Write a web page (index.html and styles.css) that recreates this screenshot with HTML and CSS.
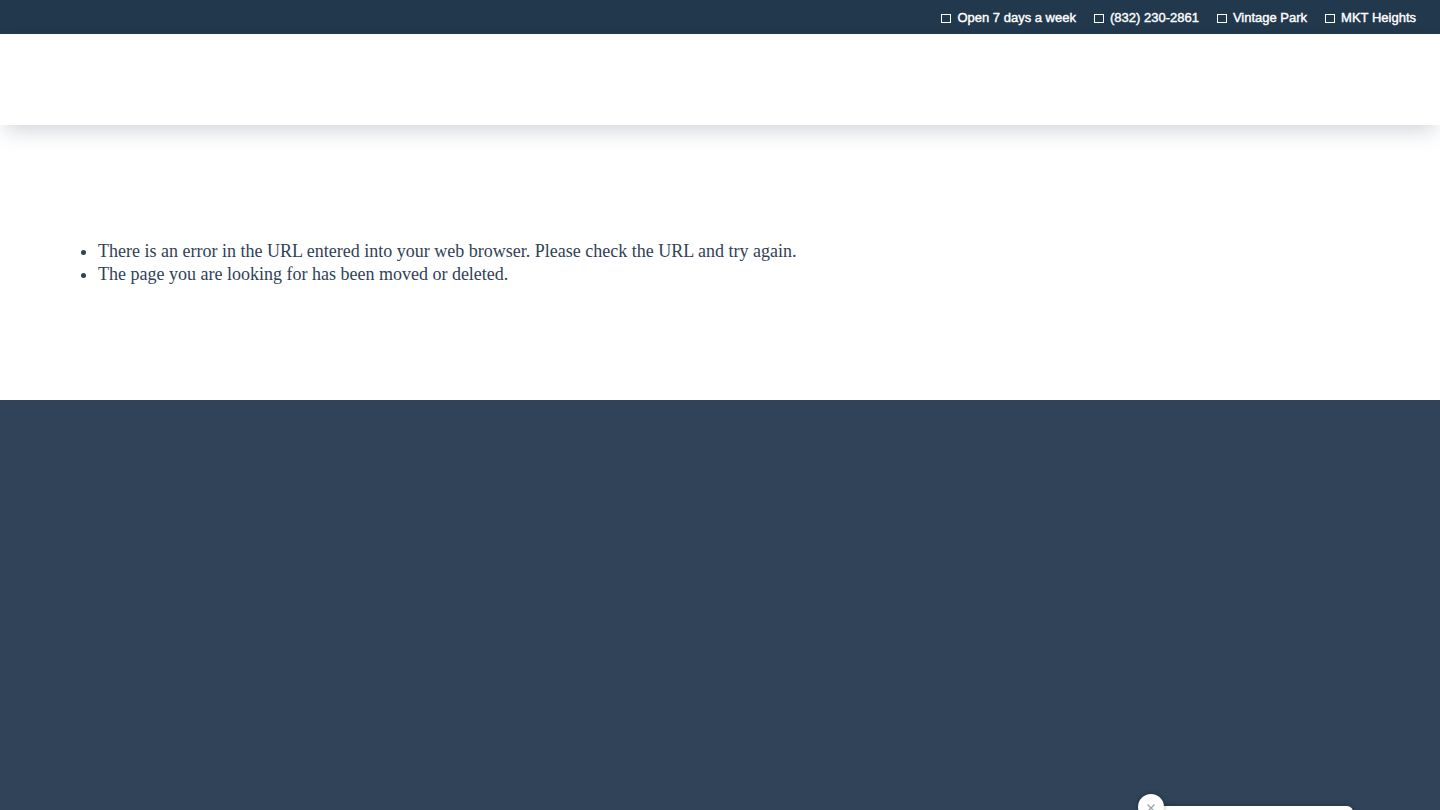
FILE: index.html
```html
<!DOCTYPE html>
<html lang="en">
<head>
<meta charset="utf-8">
<meta name="viewport" content="width=device-width, initial-scale=1">
<title>Page not found</title>
<link rel="stylesheet" href="styles.css">
</head>
<body>
<div class="topbar">
  <span class="topbar-item"><span class="box"></span>Open 7 days a week</span>
  <a class="topbar-item" href="tel:8322302861"><span class="box"></span>(832) 230-2861</a>
  <a class="topbar-item" href="#"><span class="box"></span>Vintage Park</a>
  <a class="topbar-item" href="#"><span class="box"></span>MKT Heights</a>
</div>
<header class="header"></header>
<main class="content">
  <ul class="reasons">
    <li>There is an error in the URL entered into your web browser. Please check the URL and try again.</li>
    <li>The page you are looking for has been moved or deleted.</li>
  </ul>
</main>
<footer class="footer"></footer>
<aside class="popup">
  <button class="popup-close" type="button" aria-label="Close">
    <svg width="8" height="8" viewBox="0 0 8 8" aria-hidden="true"><path d="M0.5 0.5 L7.5 7.5 M7.5 0.5 L0.5 7.5" stroke="#9aa2ab" stroke-width="1.3" fill="none"/></svg>
  </button>
</aside>
</body>
</html>
```
FILE: styles.css
```css
* {
  box-sizing: border-box;
}

body {
  margin: 0;
  min-height: 100vh;
  display: flex;
  flex-direction: column;
  overflow: hidden;
  background: #fff;
  color: #304257;
  font-family: "Liberation Serif", "Times New Roman", serif;
  font-size: 18px;
  line-height: 23px;
}

.topbar {
  display: flex;
  flex-wrap: wrap;
  justify-content: flex-end;
  gap: 18px;
  padding: 9px 24px 7px;
  background: #22384d;
  color: #fff;
  font-family: "Liberation Sans", Arial, sans-serif;
  font-size: 13px;
  line-height: 18px;
  -webkit-text-stroke: 0.4px #fff;
}

.topbar-item {
  display: flex;
  align-items: center;
  gap: 6px;
  color: inherit;
  text-decoration: none;
}

.box {
  width: 10px;
  height: 9px;
  border: 1px solid #fff;
}

.header {
  height: 91px;
  background: #fff;
  box-shadow: 0 10px 20px -5px rgba(34, 56, 77, 0.22);
}

.content {
  padding: 115px 80px 114px;
}

.reasons {
  margin: 0;
  padding-left: 18px;
}

.footer {
  flex: 1;
  background: #304358;
}

.popup {
  position: fixed;
  right: 87px;
  bottom: -116px;
  width: 202px;
  height: 120px;
  border-radius: 6px;
  background: #fff;
  box-shadow: 0 0 6px rgba(0, 0, 0, 0.3);
}

.popup-close {
  position: absolute;
  top: -12px;
  left: -13px;
  width: 26px;
  height: 26px;
  display: flex;
  align-items: center;
  justify-content: center;
  padding: 2px 0 0;
  border: 0;
  border-radius: 50%;
  background: #fff;
  box-shadow: 0 0 5px rgba(0, 0, 0, 0.3);
}
```
